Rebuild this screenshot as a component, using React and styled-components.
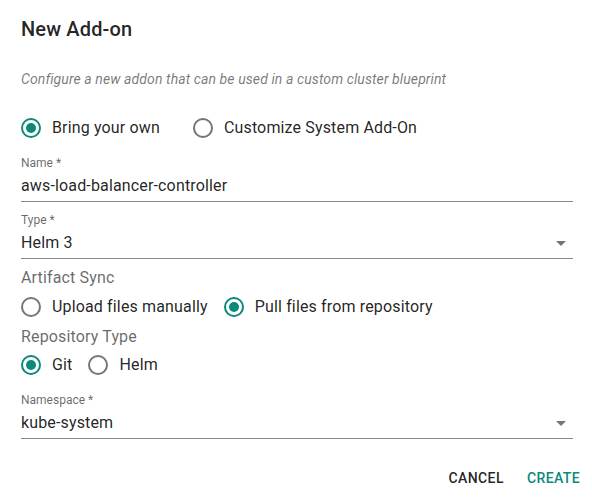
import React from "react";
import styled, { createGlobalStyle } from "styled-components";

const TEAL = "#0b8a7a";

const GlobalStyle = createGlobalStyle`
  body {
    margin: 0;
    background: #fff;
    font-family: Roboto, "Liberation Sans", sans-serif;
    color: rgba(0, 0, 0, 0.87);
  }
`;

const Dialog = styled.div`
  width: 592px;
  height: 501px;
  box-sizing: border-box;
  padding: 13px 19px 0 21px;
  display: flex;
  flex-direction: column;
`;

const Title = styled.h2`
  margin: 0;
  font-size: 20px;
  font-weight: 500;
  line-height: 32px;
  letter-spacing: 0.15px;
`;

const Subtitle = styled.p`
  margin: 24px 0 0;
  font-size: 14px;
  line-height: 20px;
  font-style: italic;
  letter-spacing: 0.1px;
  color: rgba(0, 0, 0, 0.54);
`;

const RadioRow = styled.div`
  display: flex;
  align-items: center;
  height: 30px;
  margin-top: ${p => p.$top || 0}px;
  gap: ${p => p.$gap || 16}px;
`;

const Option = styled.label`
  display: flex;
  align-items: center;
  gap: 11px;
  font-size: 16px;
  line-height: 24px;
  letter-spacing: 0.15px;
  cursor: pointer;
`;

const Circle = styled.span`
  width: 20px;
  height: 20px;
  box-sizing: border-box;
  border-radius: 50%;
  border: 2px solid ${p => (p.$on ? TEAL : "#757575")};
  display: flex;
  align-items: center;
  justify-content: center;
  &::after {
    content: "";
    width: 10px;
    height: 10px;
    border-radius: 50%;
    background: ${TEAL};
    display: ${p => (p.$on ? "block" : "none")};
  }
`;

const Field = styled.div`
  position: relative;
  margin-top: ${p => p.$top || 0}px;
  border-bottom: 1px solid #8a8a8a;
  padding-bottom: 4px;
`;

const FieldLabel = styled.div`
  font-size: 12px;
  line-height: 16px;
  color: rgba(0, 0, 0, 0.6);
`;

const FieldValue = styled.div`
  margin-top: 4px;
  font-size: 16px;
  line-height: 22px;
  letter-spacing: 0.15px;
`;

const Arrow = styled.svg`
  position: absolute;
  right: 0;
  bottom: 3px;
  width: 24px;
  height: 24px;
  fill: rgba(0, 0, 0, 0.54);
`;

const SectionLabel = styled.div`
  margin-top: ${p => p.$top || 0}px;
  font-size: 16px;
  line-height: 24px;
  letter-spacing: 0.15px;
  color: rgba(0, 0, 0, 0.6);
`;

const Actions = styled.div`
  display: flex;
  justify-content: flex-end;
  gap: 7px;
  margin: 21px -15px 0 0;
`;

const Button = styled.button`
  border: none;
  background: none;
  height: 36px;
  min-width: 64px;
  padding: 6px 8px;
  font-family: Roboto, "Liberation Sans", sans-serif;
  font-size: 14px;
  font-weight: 500;
  letter-spacing: 0.4px;
  text-transform: uppercase;
  color: ${p => (p.$primary ? TEAL : "rgba(0,0,0,0.87)")};
  cursor: pointer;
`;

const Radio = ({ on, children }) => (
  <Option>
    <Circle $on={on} />
    {children}
  </Option>
);

const DropArrow = () => (
  <Arrow viewBox="0 0 24 24">
    <path d="M7 10l5 5 5-5z" />
  </Arrow>
);

const App = () => (
  <>
    <GlobalStyle />
    <Dialog>
      <Title>New Add-on</Title>
      <Subtitle>Configure a new addon that can be used in a custom cluster blueprint</Subtitle>

      <RadioRow $top={24} $gap={33}>
        <Radio on>Bring your own</Radio>
        <Radio>Customize System Add-On</Radio>
      </RadioRow>

      <Field $top={12}>
        <FieldLabel>Name *</FieldLabel>
        <FieldValue>aws-load-balancer-controller</FieldValue>
      </Field>

      <Field $top={10}>
        <FieldLabel>Type *</FieldLabel>
        <FieldValue>Helm 3</FieldValue>
        <DropArrow />
      </Field>

      <SectionLabel $top={7}>Artifact Sync</SectionLabel>
      <RadioRow $top={2}>
        <Radio>Upload files manually</Radio>
        <Radio on>Pull files from repository</Radio>
      </RadioRow>

      <SectionLabel $top={3}>Repository Type</SectionLabel>
      <RadioRow $top={1}>
        <Radio on>Git</Radio>
        <Radio>Helm</Radio>
      </RadioRow>

      <Field $top={12}>
        <FieldLabel>Namespace *</FieldLabel>
        <FieldValue>kube-system</FieldValue>
        <DropArrow />
      </Field>

      <Actions>
        <Button>Cancel</Button>
        <Button $primary>Create</Button>
      </Actions>
    </Dialog>
  </>
);

export default App;
